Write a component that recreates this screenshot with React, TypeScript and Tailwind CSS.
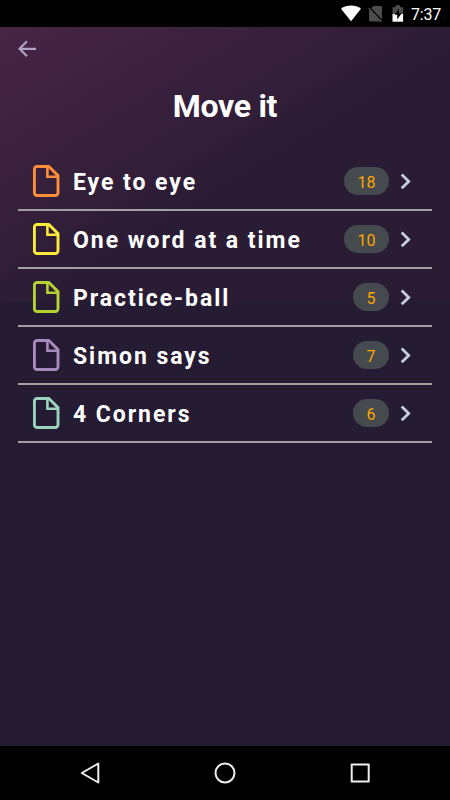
const exercises = [
  { title: "Eye to eye", count: 18, color: "text-[#fb9038]" },
  { title: "One word at a time", count: 10, color: "text-[#fcec38]" },
  { title: "Practice-ball", count: 5, color: "text-[#b4d333]" },
  { title: "Simon says", count: 7, color: "text-[#a78bbd]" },
  { title: "4 Corners", count: 6, color: "text-[#9bd3bd]" },
];

function FileIcon({ className }: { className: string }) {
  return (
    <svg
      className={`h-8 w-[27px] shrink-0 ${className}`}
      viewBox="0 0 27 32"
      fill="none"
      stroke="currentColor"
      strokeWidth="2.9"
      strokeLinejoin="round"
    >
      <path d="M4.100 1.500h11.800l9.100 9.100v17.200a2.700 2.700 0 0 1-2.700 2.700H4.100a2.700 2.700 0 0 1-2.700-2.700V4.200A2.700 2.700 0 0 1 4.100 1.500Z" />
      <path d="M14.400 1.500v10.300h10.600" strokeWidth="2.600" strokeLinejoin="miter" />
    </svg>
  );
}

function StatusBar() {
  return (
    <div className="flex h-[27px] shrink-0 items-center justify-end bg-black pr-2">
      <svg className="h-[17px] w-5" viewBox="0 0 20 17" fill="#fff">
        <path d="M10 16.200 0 3.800C5.500-.6 14.500-.6 20 3.800Z" />
      </svg>
      <svg className="ml-[7px] h-[17px] w-[15px]" viewBox="0 0 15 17">
        <path d="M5.500 1h7.200c.8 0 1.300.5 1.300 1.300v14.200H2.200c-.6 0-1.200-.5-1.200-1.200V5.500Z" fill="#4d4d4d" />
        <path d="m0 1.200 14.500 15" stroke="#000" strokeWidth="1.800" />
        <path d="m.5 3 13.300 14" stroke="#4d4d4d" strokeWidth="1.200" />
      </svg>
      <svg className="ml-[9px] h-[17px] w-3" viewBox="0 0 12 17">
        <path d="M.5 2.300h3V.3h4.600v2h3V9H.5Z" fill="#4d4d4d" />
        <path d="M.5 9h10.600v7.700H.5Z" fill="#fff" />
        <path d="M7 3.500 2.500 9.800h2.700v4.700l4.500-6.200H7Z" fill="#000" />
      </svg>
      <span className="ml-[7px] mt-0.5 w-[31px] whitespace-nowrap text-base leading-5 tracking-[-0.200px]">7:37</span>
    </div>
  );
}

function ExerciseRow({ title, count, color }: (typeof exercises)[number]) {
  return (
    <li className="flex h-[58px] items-center border-b-2 border-[#a19f9f] pl-[15px] pr-[19px]">
      <FileIcon className={color} />
      <span className="ml-[13px] mt-1 flex-1 whitespace-nowrap text-[23px] font-bold tracking-[1.950px]">
        {title}
      </span>
      <span className="flex h-7 items-center rounded-full bg-[#444a4e] px-[13.500px] pt-[3px] text-base text-[#ffa500]">
        {count}
      </span>
      <svg className="ml-[11px] h-4 w-[13px]" viewBox="0 0 13 16" fill="none" stroke="#c5cedb" strokeWidth="2.800">
        <path d="m1.700 1.600 7 6.800-7 6.800" />
      </svg>
    </li>
  );
}

function NavBar() {
  return (
    <nav className="grid h-[54px] shrink-0 grid-cols-3 items-center bg-black px-[22.500px]">
      {["M20.300 2.500v19L3.800 12Z", "M12 2.500a9.500 9.500 0 1 1 0 19 9.500 9.500 0 0 1 0-19Z", "M3.700 3.500h17v17h-17Z"].map((d) => (
        <svg
          key={d}
          className="h-6 w-6 justify-self-center"
          viewBox="0 0 24 24"
          fill="none"
          stroke="#efefef"
          strokeWidth="2"
          strokeLinejoin="round"
        >
          <path d={d} />
        </svg>
      ))}
    </nav>
  );
}

export default function App() {
  return (
    <div className="flex h-[800px] w-[450px] flex-col overflow-hidden bg-[#251b33] font-['Roboto',sans-serif] text-white">
      <StatusBar />
      <main className="flex-1 bg-[linear-gradient(149deg,#482545_0%,#2b1c35_55%,#2a1c33_100%)] bg-[length:100%_274px] bg-no-repeat px-[18px] pt-[13px]">
        <svg className="h-[18px] w-[18px]" viewBox="0 0 18 18" fill="none" stroke="#b2a4c2" strokeWidth="2.200">
          <path d="M18 8.800H1.500M9 1.300 1.500 8.800 9 16.300" />
        </svg>
        <h1 className="mt-[29px] text-center text-[32px] font-bold leading-[38px] tracking-[-0.300px]">Move it</h1>
        <ul className="mt-7">
          {exercises.map((item) => (
            <ExerciseRow key={item.title} {...item} />
          ))}
        </ul>
      </main>
      <NavBar />
    </div>
  );
}
